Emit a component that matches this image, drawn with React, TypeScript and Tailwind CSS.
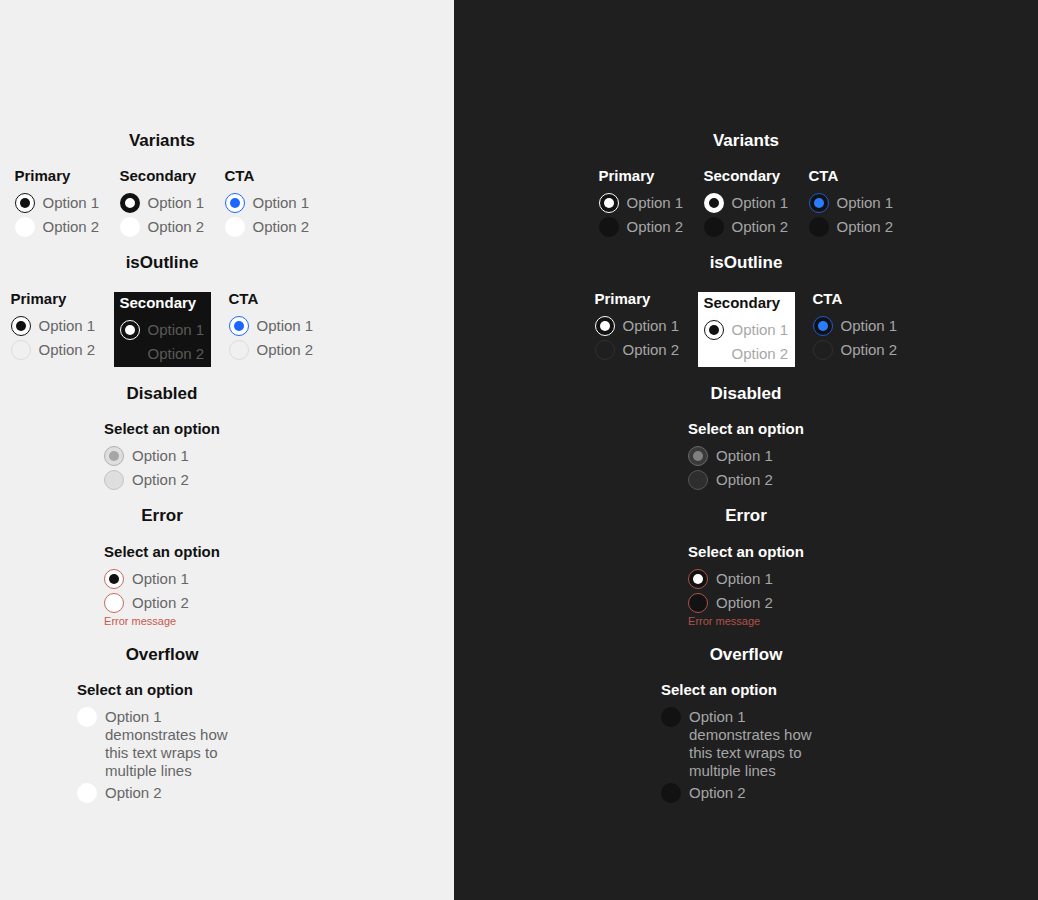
type Theme = {
  panel: string;
  title: string;
  text: string;
  off: string;
  offOutline: string;
  primaryOn: string;
  primaryDot: string;
  secondaryOn: string;
  ctaOn: string;
  ctaDot: string;
  boxBg: string;
  boxTitle: string;
  boxText: string;
  boxOn: string;
  boxDot: string;
  disOn: string;
  disDot: string;
  disOff: string;
  errOn: string;
  errDot: string;
  errOff: string;
  errText: string;
};

const light: Theme = {
  panel: "w-[454px] bg-[#f0f0f0] pr-[130px]",
  title: "text-[#111111]",
  text: "text-[#666666]",
  off: "bg-white",
  offOutline: "border border-[#dcdcdc]",
  primaryOn: "border-[1.5px] border-[#111111] bg-white",
  primaryDot: "bg-[#111111]",
  secondaryOn: "border-[5px] border-[#111111] bg-white",
  ctaOn: "border-[1.5px] border-[#1a66ff] bg-white",
  ctaDot: "bg-[#1a66ff]",
  boxBg: "bg-[#111111]",
  boxTitle: "text-white",
  boxText: "text-[#5a5a5a]",
  boxOn: "border-[1.5px] border-white bg-[#111111]",
  boxDot: "bg-white",
  disOn: "border-[1.5px] border-[#b0b0b0] bg-[#dedede]",
  disDot: "bg-[#a6a6a6]",
  disOff: "border-[1.5px] border-[#c4c4c4] bg-[#dedede]",
  errOn: "border border-[#c8685c] bg-white",
  errDot: "bg-[#111111]",
  errOff: "border border-[#c8685c] bg-white",
  errText: "text-[#c8584c]",
};

const dark: Theme = {
  panel: "flex-1 bg-[#1f1f1f]",
  title: "text-white",
  text: "text-[#a6a6a6]",
  off: "bg-[#121212]",
  offOutline: "border border-[#303030]",
  primaryOn: "border-[1.5px] border-white bg-[#121212]",
  primaryDot: "bg-white",
  secondaryOn: "border-[5px] border-white bg-[#121212]",
  ctaOn: "border-[1.5px] border-[#1f5ad8] bg-[#121212]",
  ctaDot: "bg-[#2b7bff]",
  boxBg: "bg-white",
  boxTitle: "text-[#111111]",
  boxText: "text-[#a8a8a8]",
  boxOn: "border-[1.5px] border-[#111111] bg-white",
  boxDot: "bg-[#111111]",
  disOn: "border-[1.5px] border-[#6a6a6a] bg-[#3a3a3a]",
  disDot: "bg-[#808080]",
  disOff: "border-[1.5px] border-[#555555] bg-[#2e2e2e]",
  errOn: "border border-[#a8554b] bg-[#121212]",
  errDot: "bg-white",
  errOff: "border border-[#a8554b] bg-[#121212]",
  errText: "text-[#b0524a]",
};

const Radio = ({ outer, dot }: { outer: string; dot?: string }) => (
  <span
    className={`flex h-5 w-5 shrink-0 items-center justify-center rounded-full ${outer}`}
  >
    {dot && <span className={`h-2.5 w-2.5 rounded-full ${dot}`} />}
  </span>
);

const Option = ({
  label,
  outer,
  dot,
  text,
  cls = "",
}: {
  label: string;
  outer: string;
  dot?: string;
  text: string;
  cls?: string;
}) => (
  <div className={`flex items-start gap-2 py-0.5 ${cls}`}>
    <Radio outer={outer} dot={dot} />
    <span className={`py-px text-[15px] leading-[18px] ${text}`}>{label}</span>
  </div>
);

const Heading = ({ children, cls }: any) => (
  <h2 className={`text-[17px] font-bold leading-6 ${cls}`}>{children}</h2>
);

const Label = ({ children, cls }: any) => (
  <div className={`mb-[5px] text-[15px] font-bold leading-5 ${cls}`}>
    {children}
  </div>
);

const Group = ({ title, t, on, dot, off, boxed }: any) => (
  <div className="flex w-[85px] flex-col">
    <Label cls={boxed ? t.boxTitle : t.title}>{title}</Label>
    <Option label="Option 1" outer={on} dot={dot} text={boxed ? t.boxText : t.text} />
    <Option label="Option 2" outer={off} text={boxed ? t.boxText : t.text} />
  </div>
);

const Panel = ({ t }: { t: Theme }) => (
  <div className={`flex min-h-[900px] flex-col items-center pt-[129px] ${t.panel}`}>
    <Heading cls={t.title}>Variants</Heading>
    <div className="mt-[13px] flex gap-5">
      <Group title="Primary" t={t} on={t.primaryOn} dot={t.primaryDot} off={t.off} />
      <Group title="Secondary" t={t} on={t.secondaryOn} off={t.off} />
      <Group title="CTA" t={t} on={t.ctaOn} dot={t.ctaDot} off={t.off} />
    </div>

    <div className="mt-3">
      <Heading cls={t.title}>isOutline</Heading>
    </div>
    <div className="mt-[14px] flex items-start gap-[18px]">
      <Group title="Primary" t={t} on={t.primaryOn} dot={t.primaryDot} off={t.offOutline} />
      <div className={`mt-[3px] px-1.5 py-px ${t.boxBg}`}>
        <Group
          title="Secondary"
          t={t}
          on={t.boxOn}
          dot={t.boxDot}
          off="border border-transparent"
          boxed
        />
      </div>
      <Group title="CTA" t={t} on={t.ctaOn} dot={t.ctaDot} off={t.offOutline} />
    </div>

    <div className="mt-[15px]">
      <Heading cls={t.title}>Disabled</Heading>
    </div>
    <div className="mt-[13px] flex flex-col">
      <Label cls={t.title}>Select an option</Label>
      <Option label="Option 1" outer={t.disOn} dot={t.disDot} text={t.text} />
      <Option label="Option 2" outer={t.disOff} text={t.text} />
    </div>

    <div className="mt-3">
      <Heading cls={t.title}>Error</Heading>
    </div>
    <div className="mt-[14px] flex flex-col">
      <Label cls={t.title}>Select an option</Label>
      <Option label="Option 1" outer={t.errOn} dot={t.errDot} text={t.text} />
      <Option label="Option 2" outer={t.errOff} text={t.text} />
      <span className={`-mt-px text-[11px] leading-[14px] ${t.errText}`}>
        Error message
      </span>
    </div>

    <div className="mt-[15px]">
      <Heading cls={t.title}>Overflow</Heading>
    </div>
    <div className="mt-[13px] flex w-[170px] flex-col">
      <Label cls={t.title}>Select an option</Label>
      <Option
        label="Option 1 demonstrates how this text wraps to multiple lines"
        outer={t.off}
        text={t.text}
      />
      <Option label="Option 2" outer={t.off} text={t.text} cls="-mt-0.5" />
    </div>
  </div>
);

export default function App() {
  return (
    <div className="flex min-h-[900px] w-full font-['Liberation_Sans',Arial,sans-serif]">
      <Panel t={light} />
      <Panel t={dark} />
    </div>
  );
}
